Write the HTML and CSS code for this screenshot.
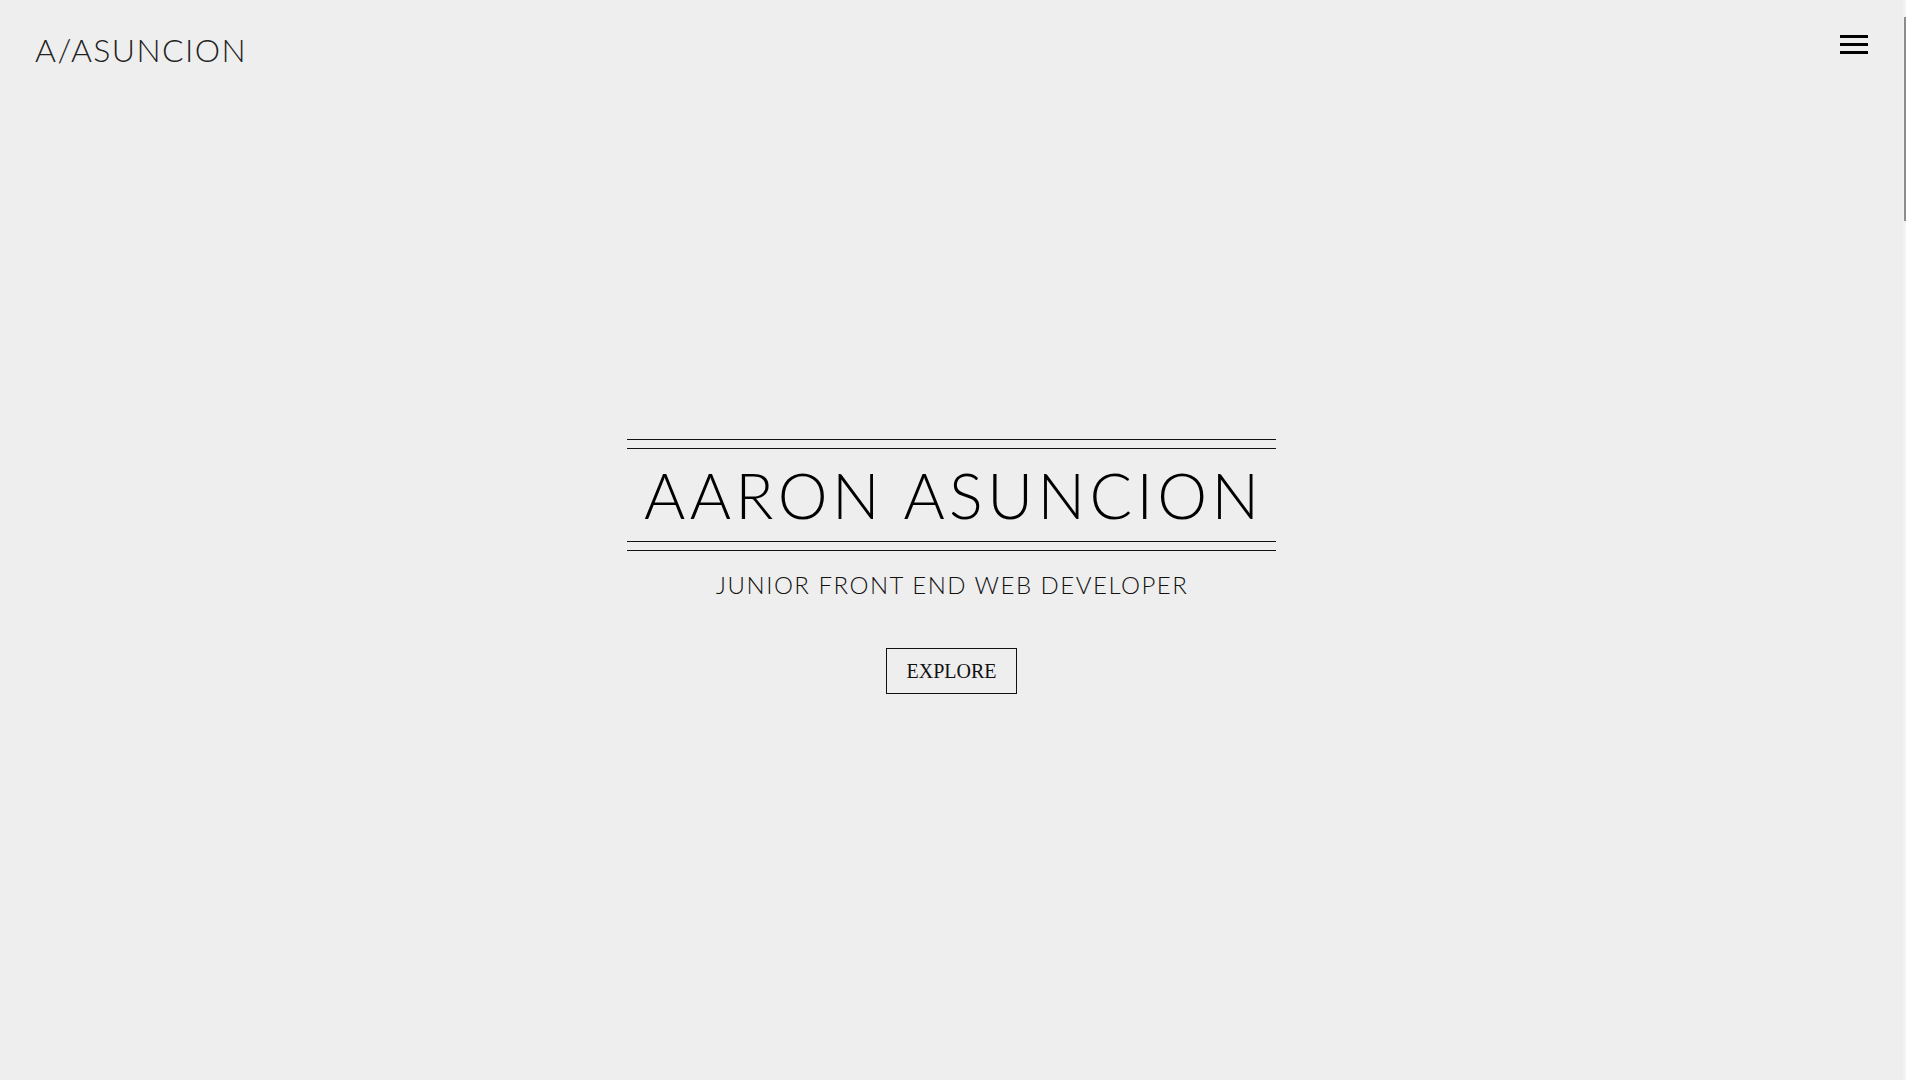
FILE: index.html
```html
<!DOCTYPE html>
<html lang="en">
<head>
<meta charset="utf-8">
<title>A/ASUNCION</title>
<link rel="stylesheet" href="styles.css">
</head>
<body>
<div class="page">
  <header class="header">
    <a class="logo" href="#">A/ASUNCION</a>
    <button class="menu" aria-label="Menu">
      <span class="bar"></span><span class="bar"></span><span class="bar"></span>
    </button>
  </header>
  <section class="hero">
    <div class="title-outer">
      <div class="title-inner">
        <h1 class="title">AARON ASUNCION</h1>
      </div>
    </div>
    <p class="subtitle">JUNIOR FRONT END WEB DEVELOPER</p>
    <a class="explore" href="#">EXPLORE</a>
  </section>
</div>
<div class="scroll-track"><div class="scroll-thumb"></div></div>
</body>
</html>
```
FILE: styles.css
```css
html, body {
  margin: 0;
  padding: 0;
  background: #eeeeee;
  overflow: hidden;
}
.page {
  margin-right: 3px;
  height: 1080px;
  font-family: Lato, "Open Sans", sans-serif;
  color: #111;
}
.header {
  height: 69px;
  box-sizing: border-box;
  padding: 0 35px;
  display: flex;
  justify-content: space-between;
  align-items: flex-start;
}
.logo {
  margin-top: 31px;
  font-size: 32px;
  font-weight: 300;
  line-height: 38px;
  letter-spacing: 1.4px;
  color: #222;
  text-decoration: none;
}
.menu {
  margin-top: 35px;
  width: 28px;
  padding: 0;
  border: 0;
  background: none;
  display: flex;
  flex-direction: column;
  gap: 5px;
}
.bar {
  display: block;
  width: 28px;
  height: 3px;
  background: #000;
}
.hero {
  padding-top: 370px;
  display: flex;
  flex-direction: column;
  align-items: center;
}
.title-outer {
  width: 649px;
  border-top: 1px solid #111;
  border-bottom: 1px solid #111;
  padding: 8px 0;
}
.title-inner {
  border-top: 1px solid #111;
  border-bottom: 1px solid #111;
}
.title {
  margin: 0;
  padding-left: 4.4px;
  font-size: 63px;
  font-weight: 300;
  line-height: 92px;
  letter-spacing: 4.4px;
  text-align: center;
  color: #000;
}
.subtitle {
  margin: 19px 0 0 0;
  padding-left: 1.5px;
  font-size: 24px;
  font-weight: 300;
  line-height: 29px;
  letter-spacing: 1.5px;
  color: #111;
}
.explore {
  margin-top: 49px;
  display: block;
  width: 129px;
  height: 44px;
  box-sizing: content-box;
  border: 1px solid #111;
  text-align: center;
  font-family: "Liberation Serif", "Times New Roman", serif;
  font-size: 20px;
  line-height: 45px;
  color: #111;
  text-decoration: none;
}
.scroll-track {
  position: fixed;
  top: 0;
  right: 0;
  width: 3px;
  height: 100vh;
  background: #f3f3f3;
}
.scroll-thumb {
  position: absolute;
  top: 17px;
  right: 0;
  width: 2px;
  height: 204px;
  background: #8c8c8c;
}
```
